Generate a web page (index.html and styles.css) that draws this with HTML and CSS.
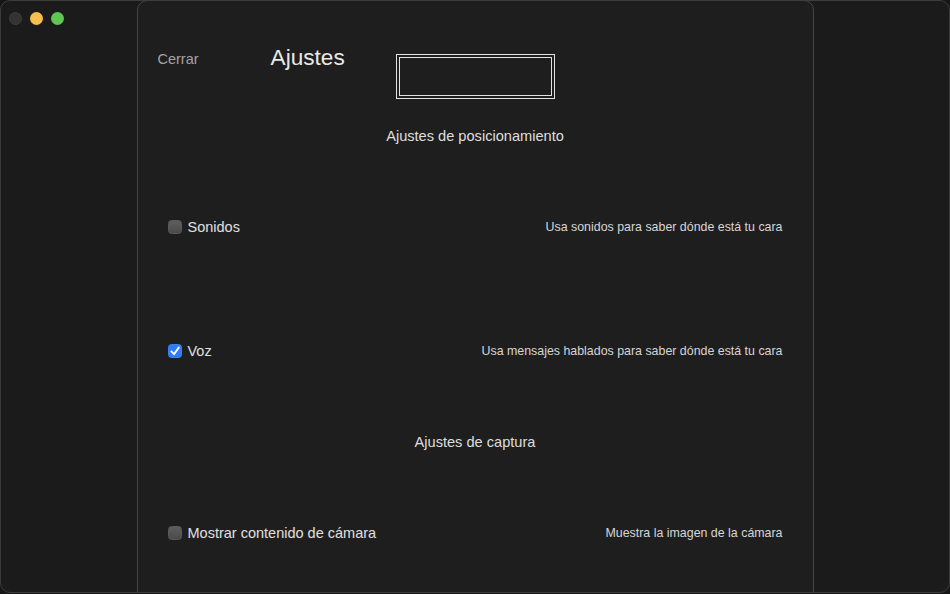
FILE: index.html
```html
<!DOCTYPE html>
<html lang="es">
<head>
<meta charset="utf-8">
<title>Ajustes</title>
<link rel="stylesheet" href="styles.css">
</head>
<body>
<div class="window">
  <div class="lights">
    <span class="light light-close"></span>
    <span class="light light-min"></span>
    <span class="light light-max"></span>
  </div>
  <div class="sheet">
    <div class="header">
      <div class="header-left">
        <span class="close-btn">Cerrar</span>
        <h1 class="title">Ajustes</h1>
      </div>
      <div class="field"></div>
      <div></div>
    </div>

    <div class="section section-first">Ajustes de posicionamiento</div>

    <div class="row row-first">
      <label class="check"><span class="box"></span><span class="label">Sonidos</span></label>
      <span class="desc">Usa sonidos para saber dónde está tu cara</span>
    </div>

    <div class="row row-far">
      <label class="check"><span class="box box-on"><svg viewBox="0 0 14 14" width="14" height="14"><path d="M3.4 7.4 L6 10.2 L10.8 3.6" fill="none" stroke="#fff" stroke-width="1.9" stroke-linecap="round" stroke-linejoin="round"/></svg></span><span class="label">Voz</span></label>
      <span class="desc">Usa mensajes hablados para saber dónde está tu cara</span>
    </div>

    <div class="section section-next">Ajustes de captura</div>

    <div class="row row-first">
      <label class="check"><span class="box"></span><span class="label">Mostrar contenido de cámara</span></label>
      <span class="desc">Muestra la imagen de la cámara</span>
    </div>
  </div>
</div>
</body>
</html>
```

FILE: styles.css
```css
html, body {
  margin: 0;
  padding: 0;
  background: #161616;
}

body {
  width: 950px;
  height: 594px;
  overflow: hidden;
  font-family: "Liberation Sans", Arial, sans-serif;
}

.window {
  position: relative;
  box-sizing: border-box;
  width: 950px;
  height: 593px;
  background: #1c1b1c;
  border: 1px solid #3c3c3c;
  border-radius: 10px;
  display: flex;
  justify-content: center;
  overflow: hidden;
}

.lights {
  position: absolute;
  left: 8px;
  top: 11px;
  display: flex;
  gap: 8px;
}

.light {
  width: 13px;
  height: 13px;
  border-radius: 50%;
  box-sizing: border-box;
}

.light-close {
  background: #343334;
  border: 1px solid #3e3d3e;
}

.light-min {
  background: #f6be4f;
}

.light-max {
  background: #5fc553;
}

.sheet {
  box-sizing: border-box;
  width: 677px;
  margin-top: -1px;
  height: 600px;
  background: #1f1e1f;
  border: 1px solid #464546;
  border-radius: 10px 10px 0 0;
  padding: 44px 30px 0 30px;
  display: flex;
  flex-direction: column;
}

.header {
  display: grid;
  grid-template-columns: 1fr auto 1fr;
  align-items: start;
  margin: 0 -10px;
}

.header-left {
  display: flex;
  align-items: center;
  gap: 72px;
  height: 26px;
}

.close-btn {
  color: #a3a3a3;
  font-size: 14.5px;
  line-height: 26px;
  padding-top: 2px;
}

.title {
  margin: 0;
  color: #e9e9e9;
  font-weight: normal;
  font-size: 22.6px;
  line-height: 26px;
}

.field {
  box-sizing: border-box;
  width: 159px;
  height: 45px;
  margin-top: 9px;
  border: 1px solid #e2e2e2;
  box-shadow: inset 0 0 0 2px #1f1e1f, inset 0 0 0 3px #e2e2e2;
  background: #1f1e1f;
}

.section {
  text-align: center;
  color: #dedede;
  font-size: 14.6px;
  line-height: 20px;
}

.section-first {
  margin-top: 27px;
}

.section-next {
  margin-top: 71px;
}

.row {
  display: flex;
  align-items: center;
  justify-content: space-between;
  height: 20px;
}

.row-first {
  margin-top: 71px;
}

.row-far {
  margin-top: 104px;
}

.check {
  display: flex;
  align-items: center;
  gap: 6px;
}

.box {
  box-sizing: border-box;
  width: 14px;
  height: 14px;
  border-radius: 3.5px;
  background: linear-gradient(#5f5e5f, #4b4a4b);
  border: 1px solid #5a595a;
  display: flex;
}

.box-on {
  background: #2e7cf6;
  border-color: #3a83f5;
}

.box-on svg {
  margin: -1px;
}

.label {
  color: #e0e0e0;
  font-size: 14.5px;
  line-height: 20px;
}

.desc {
  color: #d6d6d6;
  font-size: 12.4px;
  line-height: 20px;
}
```
